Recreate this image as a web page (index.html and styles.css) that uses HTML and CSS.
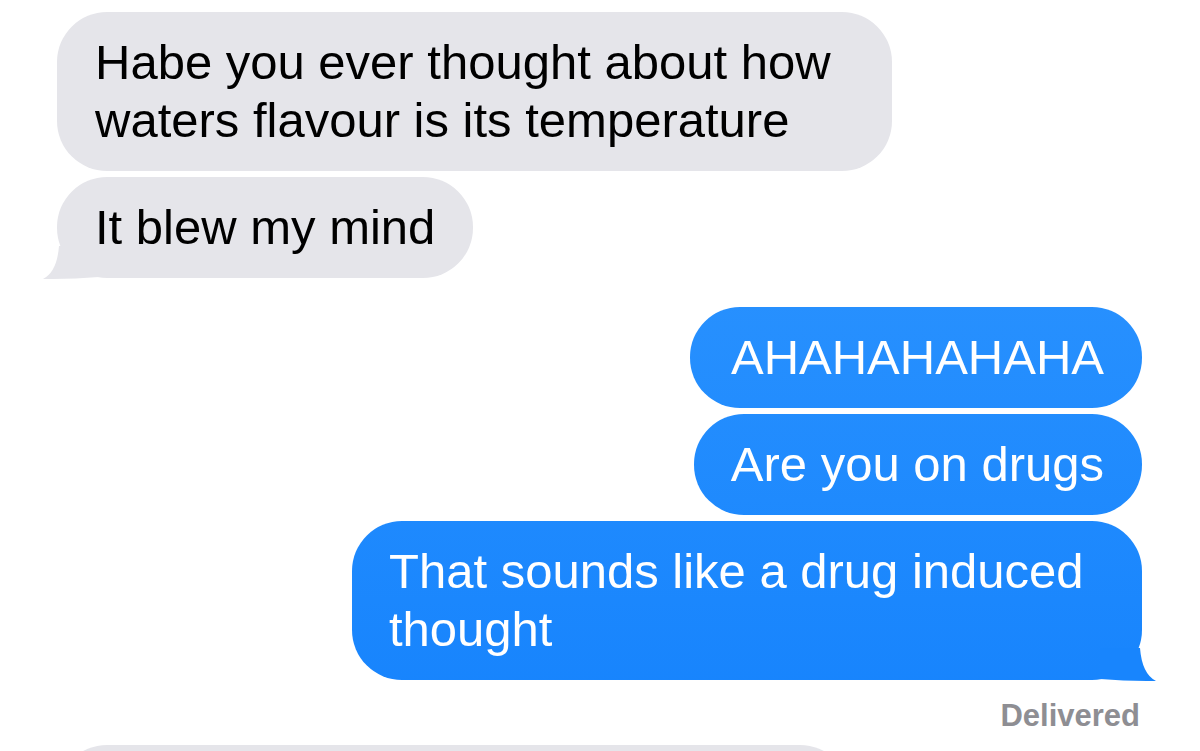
FILE: index.html
```
<!DOCTYPE html>
<html lang="en">
<head>
    <meta charset="UTF-8">
    <meta name="viewport" content="width=device-width, initial-scale=1.0">
    <title>Messages</title>
    <link rel="stylesheet" href="styles.css">
</head>
<body>

<div class="thread">
    <!-- incoming -->
    <div class="group">
        <div class="bubble them">Habe you ever thought about how waters flavour is its temperature</div>
        <div class="bubble them">It blew my mind<svg class="tail" viewBox="-16 -34 58 37"><path d="M-14 1 Q0 -6 2 -32 L42 -32 L42 -1 Q14 1.5 -14 1 Z"/></svg></div>
    </div>

    <!-- outgoing -->
    <div class="group">
        <div class="bubble me wide">AHAHAHAHAHA</div>
        <div class="bubble me">Are you on drugs</div>
        <div class="bubble me">That sounds like a drug induced thought<svg class="tail" viewBox="-16 -34 58 37"><path d="M-14 1 Q0 -6 2 -32 L42 -32 L42 -1 Q14 1.5 -14 1 Z"/></svg></div>
    </div>

    <div class="status">Delivered</div>

    <div class="bubble them peek"></div>
</div>

</body>
</html>
```

FILE: styles.css
```
html, body { margin: 0; overflow: hidden; background: #fff; }
body { font-family: "Liberation Sans", Arial, sans-serif; }

.thread {
    display: flex;
    flex-direction: column;
    gap: 29px;
    padding: 12px 58px 0 57px;
}
.group { display: flex; flex-direction: column; gap: 6px; }

.bubble {
    position: relative;
    box-sizing: border-box;
    padding: 21px 38px 22px 38px;
    border-radius: 50px;
    font-size: 49px;
    line-height: 58px;
}
.them {
    align-self: flex-start;
    max-width: 835px;
    background: #e5e5ea;
    color: #000;
}
.me {
    align-self: flex-end;
    max-width: 790px;
    padding-left: 37px;
    background: linear-gradient(to bottom, #2790fe 300px, #1784fd 700px) fixed;
    color: #fff;
}
.me.wide { padding-left: 41px; }

/* tails */
.tail {
    position: absolute;
    bottom: -3px;
    width: 58px;
    height: 37px;
}
.them .tail { left: -16px; fill: #e5e5ea; }
.me .tail { right: -16px; fill: #1885fd; transform: scaleX(-1); }

.status {
    align-self: flex-end;
    margin: -11px 2px 0 0;
    font-size: 31px;
    line-height: 36px;
    font-weight: bold;
    color: #8e8e93;
}

.peek {
    width: 793px;
    height: 101px;
    margin-top: -18px;
}
```
